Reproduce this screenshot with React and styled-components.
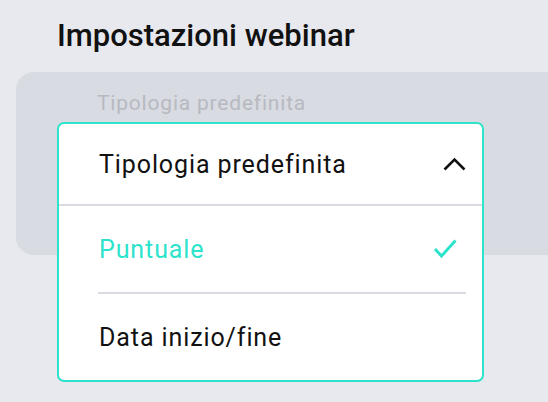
import React, { useState } from "react";
import styled, { createGlobalStyle } from "styled-components";

const GlobalStyle = createGlobalStyle`
  html, body {
    margin: 0;
    padding: 0;
    background: #e8e9ee;
    font-family: Roboto, "Liberation Sans", sans-serif;
    overflow: hidden;
  }
`;

const teal = "#2ee3cb";

const Page = styled.div`
  width: 548px;
  height: 402px;
  padding-top: 17px;
  box-sizing: border-box;
  overflow: hidden;
`;

const Title = styled.h1`
  margin: 0 0 17px 57px;
  font-size: 31px;
  line-height: 38px;
  font-weight: 500;
  color: #111;
`;

const Panel = styled.div`
  margin-left: 16px;
  width: 560px;
  height: 183px;
  box-sizing: border-box;
  padding: 19px 0 0 41px;
  background: #d9dbe3;
  border-radius: 18px;
`;

const Label = styled.div`
  margin-left: 40px;
  margin-bottom: 7px;
  font-size: 21px;
  line-height: 24px;
  letter-spacing: 0.8px;
  color: #b7b9c1;
`;

const SelectWrap = styled.div`
  position: relative;
  width: 427px;
  height: 83px;
`;

const Dropdown = styled.div`
  position: absolute;
  top: 0;
  left: 0;
  right: 0;
  background: #fff;
  border: 2px solid ${teal};
  border-radius: 7px;
  overflow: hidden;
`;

const Header = styled.div`
  display: flex;
  align-items: center;
  justify-content: space-between;
  height: 80px;
  padding: 0 15px 0 40px;
  border-bottom: 2px solid #d9dbe3;
  font-size: 25px;
  letter-spacing: 0.9px;
  color: #111;
  cursor: pointer;
`;

const Options = styled.ul`
  list-style: none;
  margin: 0;
  padding: 0 16px 0 39px;
`;

const Option = styled.li`
  display: flex;
  align-items: center;
  justify-content: space-between;
  height: 86px;
  padding: 0 9px 0 1px;
  font-size: 25px;
  letter-spacing: 0.9px;
  color: ${(p) => (p.$selected ? teal : "#111")};
  border-top: ${(p) => (p.$first ? "none" : "2px solid #d9dbe3")};
  cursor: pointer;
`;

const ChevronUp = () => (
  <svg width="25" height="14" viewBox="0 0 25 14">
    <polyline
      points="2.5,12.5 12.5,2.5 22.5,12.5"
      fill="none"
      stroke="#111"
      strokeWidth="2.6"
    />
  </svg>
);

const Check = () => (
  <svg width="24" height="20" viewBox="0 0 24 20">
    <polyline
      points="2,10 8.5,17 22.5,1.5"
      fill="none"
      stroke={teal}
      strokeWidth="3"
    />
  </svg>
);

const options = ["Puntuale", "Data inizio/fine"];

const App = () => {
  const [selected, setSelected] = useState("Puntuale");

  return (
    <Page>
      <GlobalStyle />
      <Title>Impostazioni webinar</Title>
      <Panel>
        <Label>Tipologia predefinita</Label>
        <SelectWrap>
          <Dropdown>
            <Header>
              Tipologia predefinita
              <ChevronUp />
            </Header>
            <Options>
              {options.map((o, i) => (
                <Option
                  key={o}
                  $first={i === 0}
                  $selected={o === selected}
                  onClick={() => setSelected(o)}
                >
                  {o}
                  {o === selected ? <Check /> : null}
                </Option>
              ))}
            </Options>
          </Dropdown>
        </SelectWrap>
      </Panel>
    </Page>
  );
};

export default App;
